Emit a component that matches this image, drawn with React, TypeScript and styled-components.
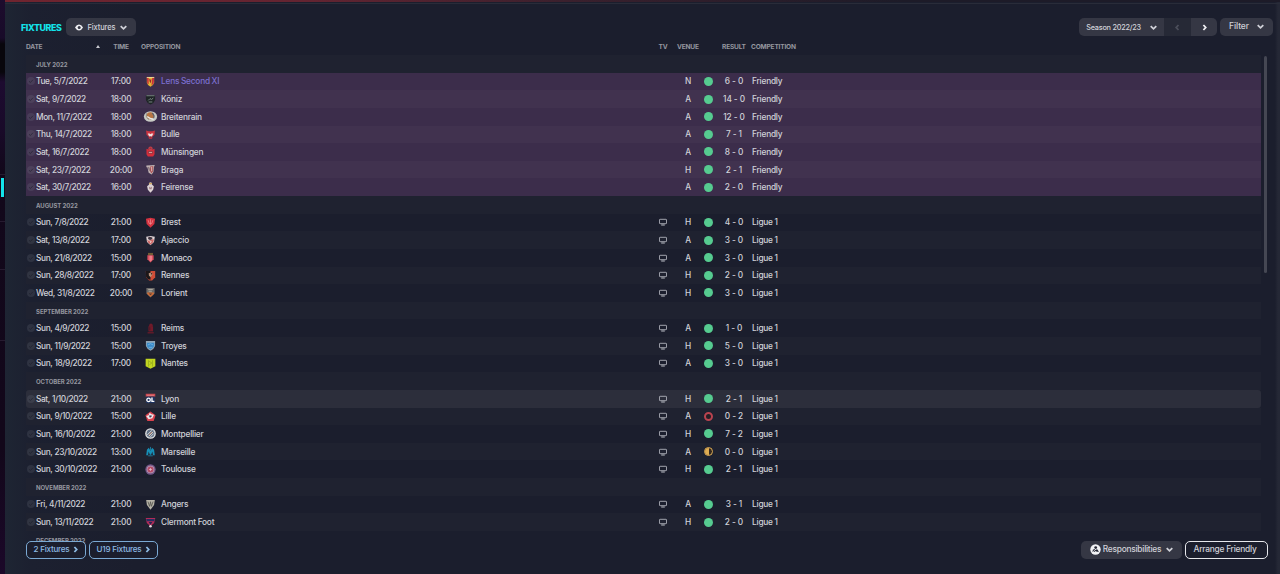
import * as React from "react"
import styled, { createGlobalStyle, css } from "styled-components"

const COLOR = {
  panel: "#1b1e2d",
  stripe: "#1f2230",
  friendly: "#3c2d4b",
  friendlyStripe: "#41324f",
  hover: "#2c2e3b",
  button: "#353744",
  text: "#d0d1d8",
  muted: "#94969f",
  cyan: "#13e3ea",
  blue: "#8dbbe4",
  blueLine: "#7ba9d3",
  link: "#7b6fd0",
  win: "#56cb90",
  loss: "#b9434f",
  draw: "#e0ad52",
}

const GlobalStyle = createGlobalStyle`
  body {
    margin: 0;
    background: ${COLOR.panel};
    overflow: hidden;
  }
  * {
    box-sizing: border-box;
  }
`

const Page = styled.div`
  display: flex;
  height: 100vh;
  font-family: Inter, "Liberation Sans", sans-serif;
  font-size: 8.3px;
  font-weight: 500;
  color: ${COLOR.text};
  white-space: nowrap;
`

const Rail = styled.div`
  display: flex;
  flex-direction: column;
  flex: none;
  width: 5px;
  background: linear-gradient(#1d0c2d 0, #180b29 38px, #08060c 44px, #08060c 72px, #1d0b30 82px, #190a29 130px, #12081b 170px, #12071a 450px, #1b0829 574px);
`

const RailItem = styled.div<{ $height: number; $active?: boolean }>`
  height: ${props => props.$height}px;
  border-bottom: 1px solid #261b30;
  ${props =>
    props.$active &&
    css`
      &::before {
        content: "";
        display: block;
        width: 3px;
        height: 19px;
        margin: 3px 0 0 1px;
        background: ${COLOR.cyan};
      }
    `}
`

const Panel = styled.main`
  display: flex;
  flex-direction: column;
  flex: 1;
  min-width: 0;
  background: linear-gradient(90deg, #20283400 1270px, #252836 1273px), linear-gradient(90deg, #1e2533 0, #1c2030 26px, ${COLOR.panel} 130px);
`

const TopEdge = styled.div`
  flex: none;
  height: 4px;
  border-bottom: 1px solid #292c39;
  background: linear-gradient(90deg, #70242f 0, #642431 300px, #3b202d 560px, #1d1b28 900px) top / 100% 2px no-repeat;
`

const Header = styled.header`
  display: flex;
  flex: none;
  height: 32px;
  padding: 14px 7px 0 16px;
`

const Title = styled.h1`
  width: 45px;
  margin: 0;
  font-size: 8.9px;
  font-weight: 800;
  line-height: 20px;
  letter-spacing: -0.4px;
  color: ${COLOR.cyan};
`

const Spacer = styled.div`
  flex: 1;
`

const Button = styled.button<{ $width: number; $size?: number }>`
  display: flex;
  align-items: center;
  justify-content: center;
  flex: none;
  gap: 5px;
  width: ${props => props.$width}px;
  height: 18px;
  padding: 0;
  border: 0;
  border-radius: 5px;
  background: ${COLOR.button};
  color: ${COLOR.text};
  font-family: inherit;
  font-weight: 500;
  font-size: ${props => props.$size || 7.5}px;
  letter-spacing: -0.12px;
`

const FilterButton = styled(Button)`
  gap: 8px;
  margin-left: 3px;
  padding-bottom: 2px;
`

const SeasonGroup = styled.div`
  display: flex;
  height: 18px;
  border-radius: 5px;
  overflow: hidden;
  ${Button} {
    border-radius: 0;
  }
`

const SeasonButton = styled(Button)`
  gap: 9px;
  letter-spacing: -0.24px;
`

const StepButton = styled(Button)<{ $dim?: boolean }>`
  background: ${props => (props.$dim ? "#262936" : COLOR.button)};
  color: ${props => (props.$dim ? "#4b4e5a" : "#f0f0f4")};
`

const Columns = styled.div`
  display: grid;
  grid-template-columns: 10px 66px 38px 21px 486px 32px 18px 22px 30px 3px 1fr;
  align-items: center;
`

const ColumnHeads = styled(Columns)`
  flex: none;
  height: 19px;
  margin: 0 0 0 21px;
  padding-top: 2px;
  font-size: 6.6px;
  font-weight: 700;
  letter-spacing: -0.2px;
  color: ${COLOR.muted};
`

const DateHead = styled.div`
  display: flex;
  align-items: center;
  justify-content: space-between;
  grid-column: 1 / 3;
  padding-right: 2px;
`

const Head = styled.div<{ $column: string; $shift?: number; $center?: boolean }>`
  grid-column: ${props => props.$column};
  margin-left: ${props => props.$shift || 0}px;
  text-align: ${props => (props.$center ? "center" : "left")};
`

const ListArea = styled.div`
  display: flex;
  flex: none;
  height: 494px;
  margin-bottom: -7px;
  padding-left: 21px;
`

const List = styled.div`
  width: 1235px;
`

const ScrollThumb = styled.div`
  width: 3px;
  height: 217px;
  margin: 1px 0 0 3px;
  border-radius: 2px;
  background: #454753;
`

const Month = styled.div<{ $striped: boolean }>`
  height: 17.635px;
  padding-left: 10px;
  line-height: 19px;
  font-size: 6px;
  font-weight: 700;
  letter-spacing: -0.05px;
  word-spacing: -0.1px;
  color: ${COLOR.muted};
  background: ${props => (props.$striped ? COLOR.stripe : "transparent")};
`

const rowColor = (kind: string | undefined, striped: boolean) => {
  if (kind === "hover") return COLOR.hover
  if (kind === "friendly") return striped ? COLOR.friendlyStripe : COLOR.friendly
  return striped ? COLOR.stripe : "transparent"
}

const Row = styled(Columns)<{ $kind?: string; $striped: boolean }>`
  height: 17.635px;
  border-radius: ${props => (props.$kind === "hover" ? 3 : 0)}px;
  background: ${props => rowColor(props.$kind, props.$striped)};
`

const Cell = styled.div<{ $center?: boolean; $color?: string }>`
  display: flex;
  align-items: center;
  justify-content: ${props => (props.$center ? "center" : "flex-start")};
  color: ${props => props.$color || "inherit"};
  letter-spacing: -0.2px;
  word-spacing: -0.3px;
`

const DateCell = styled(Cell)`
  letter-spacing: -0.36px;
  word-spacing: 0.2px;
`

const TimeCell = styled(Cell)`
  letter-spacing: -0.25px;
`

const Score = styled(Cell)`
  letter-spacing: -0.05px;
  word-spacing: -0.1px;
`

const Dot = styled.span<{ $result: string }>`
  width: 9px;
  height: 9px;
  border-radius: 50%;
  background: ${COLOR.win};
  ${props =>
    props.$result === "L" &&
    css`
      background: #251f25;
      border: 2px solid ${COLOR.loss};
    `}
  ${props =>
    props.$result === "D" &&
    css`
      border: 1.5px solid ${COLOR.draw};
      background: linear-gradient(90deg, ${COLOR.draw} 50%, #35291f 50%) padding-box;
    `}
`

const Footer = styled.footer`
  display: flex;
  flex: 1;
  align-items: flex-start;
  gap: 3px;
  margin-top: -1px;
  padding: 0 12px 0 21px;
`

const FooterButton = styled(Button)`
  gap: 3px;
  padding-bottom: 2px;
  letter-spacing: -0.25px;
`

const OutlineButton = styled(FooterButton)<{ $tone: string; $line: string }>`
  border: 1.5px solid ${props => props.$line};
  background: ${COLOR.panel};
  color: ${props => props.$tone};
  // sits over the last, partly scrolled month
  z-index: 1;
`

const SquadButton = styled(OutlineButton)`
  padding-left: 1px;
`

const ResponsibilitiesButton = styled(FooterButton)`
  gap: 2px;
  svg:last-child {
    margin-left: 3px;
  }
`

const ArrangeButton = styled(OutlineButton)`
  padding-right: 3px;
`

const chevronPaths = {
  down: "M.7 2.2 3.5 4.8 6.3 2.2",
  left: "M4.5 1 2.2 3.5 4.5 6",
  right: "M2.4 1 4.7 3.5 2.4 6",
}

const Chevron = ({ dir = "down" }: { dir?: keyof typeof chevronPaths }) => (
  <svg width="7" height="7" viewBox="0 0 7 7" fill="none" stroke="currentColor" strokeWidth="1.8">
    <path d={chevronPaths[dir]} />
  </svg>
)

const EyeIcon = () => (
  <svg width="8" height="7" viewBox="0 0 8 7">
    <path d="M0 3.5Q1.5 .6 4 .6T8 3.5Q6.5 6.4 4 6.4T0 3.5Z" fill="#eeeef2" />
    <circle cx="4.2" cy="3.4" r="1.5" fill="#353744" />
  </svg>
)

const StaffIcon = () => (
  <svg width="11" height="11" viewBox="0 0 11 11">
    <circle cx="5.5" cy="5.5" r="5.2" fill="#f2f2f5" />
    <circle cx="5.7" cy="3.6" r="1.4" fill="#252734" />
    <path d="M2 6.2 4.4 4.9 5.6 6.3 7 4.9 9 7.8H6.8L5.6 7 4.5 8H2.2L3.4 6.6Z" fill="#252734" />
    <path d="M3 8.1 5 6.2" stroke="#f2f2f5" strokeWidth=".8" />
  </svg>
)

const CheckIcon = () => (
  <svg width="10" height="10" viewBox="0 0 10 10">
    <circle cx="5" cy="5" r="4" fill="#8a8c98" fillOpacity=".17" />
    <path d="M3 5.2 4.4 6.5 7 3.7" fill="none" stroke="#191b28" strokeOpacity=".55" strokeWidth="1" />
  </svg>
)

const TvIcon = () => (
  <svg width="8" height="8" viewBox="0 0 8 8" fill="none" stroke="#b0b2bb">
    <rect x=".45" y="1.3" width="7.1" height="4.4" rx=".6" strokeWidth=".9" />
    <path d="M2.2 7H5.8" strokeWidth="1.1" />
  </svg>
)

const SHIELD = "M2 1H10V7Q9.5 9.8 6 11.6 2.5 9.8 2 7Z"

const crests: Record<string, React.ReactNode> = {
  "Lens Second XI": (
    <>
      <path d={SHIELD} fill="#e2b634" />
      <path d="M2 1H4V9L2.4 8ZM8 1H10L9.5 8 7 10.5Z" fill="#c9303b" />
      <path d="M4.5 3 6 4 7 3.2 6.4 8 5 6Z" fill="#9c2330" />
      <path d="M2 1.6H10" stroke="#f0dba0" strokeWidth="1" />
    </>
  ),
  Köniz: (
    <>
      <path d="M1 1H11V6.5Q10 9.8 6 11.5 2 9.8 1 6.5Z" fill="#1d2425" />
      <path d="M1.5 1.9H10.5M3.5 7 5.5 5 7 6 9 4.5M4 8.7H8" stroke="#8c9895" strokeWidth=".9" fill="none" />
    </>
  ),
  Breitenrain: (
    <>
      <ellipse cx="6" cy="6" rx="7.2" ry="5.7" fill="#c8cac4" />
      <ellipse cx="5.8" cy="5.3" rx="4.2" ry="3.9" fill="#b77543" />
      <path d="M1.6 2.5Q0 6 4 9.5" stroke="#8c8f88" strokeWidth="1" fill="none" />
      <path d="M2.5 6Q5 8.5 9.5 9" stroke="#e8eae6" strokeWidth="1.4" fill="none" />
      <path d="M7.8 2.2Q11 5 9.3 8" stroke="#5a5f69" strokeWidth="1.2" fill="none" />
    </>
  ),
  Bulle: (
    <>
      <path d="M1.2 1.6 4 2.4H8L10.8 1.6 10.3 6.5 8.3 7.8 7.7 10.5H4.3L3.7 7.8 1.7 6.5Z" fill="#cd3541" />
      <path d="M3 4.8H5L6 5.8 7 4.8H9L7.8 7.5 6 9.3 4.3 7.5Z" fill="#f0dfe0" />
      <path d="M5 8H7V9.6H5Z" fill="#862833" />
    </>
  ),
  Münsingen: (
    <>
      <circle cx="6" cy="3" r="2.4" fill="#c33f49" />
      <path d="M1.6 3 6 4.5 10.4 3V9L8.9 11.5H3.1L1.6 9Z" fill="#d52d3a" />
      <path d="M3.8 6H8.2V8H3.8ZM5 2.5H7" fill="#e8a9a8" stroke="#752732" strokeWidth=".7" />
    </>
  ),
  Braga: (
    <>
      <path d="M1.5 1.5 10.5 1V2.5H9.8L9.2 8.8 7.3 11.5 4 9.5 2.6 3.5H1.5Z" fill="#c0b2b2" />
      <path d="M6 2.5H9L8.6 8 7 10.3 5.2 7Z" fill="#a94d52" />
      <path d="M3.3 3 5 4V8L3.9 6Z" fill="#765f69" />
      <path d="M7.3 3V8" stroke="#e8d9d5" strokeWidth=".9" />
    </>
  ),
  Feirense: (
    <>
      <path d="M4.3 1 6 .4 7.7 1V3L9.7 4.5 8.9 8.5 6 11.7 3.1 8.5 2.3 4.5 4.3 3Z" fill="#ddd3d4" />
      <path d="M4.5 1H7.5V2.5H4.5Z" fill="#cda45d" />
      <path d="M4.3 5 6 6.2 7.7 5 7.2 8H4.8Z" fill="#a17e86" />
    </>
  ),
  Brest: (
    <>
      <path d="M1 2 6 .8 11 2 10.2 7.5 6 11.7 1.8 7.5Z" fill="#d33340" />
      <path d="M6 2.5V8.5M3.5 3.5 4.5 7H7.5L8.5 3.5" stroke="#ef8c92" strokeWidth=".8" fill="none" />
    </>
  ),
  Ajaccio: (
    <>
      <path d="M1.3 1.8 6 1 10.7 1.8 9.8 7.5 6 11.3 2.2 7.5Z" fill="#e0d6d8" />
      <path d="M3 3 5 2 8 2.6V4.6L5.5 5.4 3.7 4.6Z" fill="#423641" />
      <path d="M2.2 5.5 4.2 6.4 6 5.6 8.5 4.6 9.8 5 9 8 6 10.6 3.4 8.2Z" fill="#cd6865" />
      <path d="M5 6.8H7.5L6 9Z" fill="#ecd3d2" />
    </>
  ),
  Monaco: (
    <>
      <path d="M3.3 1H8.7V3.6H3.3Z" fill="#705b35" />
      <path d="M2.6 3.5H9.4V8L6 11.5 2.6 8Z" fill="#dc4f5d" />
      <path d="M4.8 4H7.6V9L6 10.3 4.8 9Z" fill="#ed7d87" />
    </>
  ),
  Rennes: (
    <>
      <path d="M.9 1H11.1V8L7.8 11.5H4.5L1.2 8Z" fill="#ce4d37" />
      <path d="M.9 1H6V10.5L3.5 10 1.2 8Z" fill="#1c1719" />
      <path d="M4 3.5 7.5 2.5 8.2 5 6 7.8 4.3 6Z" fill="#b59078" />
      <path d="M6.2 3 8 3.5 7.2 5.5Z" fill="#3c2324" />
    </>
  ),
  Lorient: (
    <>
      <path d="M1.5 1H10.5V7L6 11.5 1.5 7Z" fill="#6c6a68" />
      <path d="M2.3 6H9.7V7.5L6 11 2.5 7.5Z" fill="#d06c36" />
      <path d="M3.5 2.8H8.5M4 4.6H7.5" stroke="#b5b1a6" />
      <path d="M4 7H8L6 9Z" fill="#5b3e35" />
    </>
  ),
  Reims: (
    <>
      <circle cx="6.5" cy="2.5" r="1.9" fill="#6f1a29" />
      <path d="M3.8 3.5H8.8V9.2H3.8Z" fill="#711a29" />
      <path d="M2.8 10.7H9.5" stroke="#711a29" strokeWidth="1.3" />
      <path d="M5.2 4.5V8" stroke="#391825" strokeWidth=".8" />
    </>
  ),
  Troyes: (
    <>
      <path d="M1 1H11V6.5Q9.8 10 6 11.7 2.2 10 1 6.5Z" fill="#91a6b5" />
      <path d="M2 3H10V6.5Q8.5 9.5 6 10.4 3 9.5 2 6.5Z" fill="#3b8bc9" />
      <path d="M3 5.5 6 4 9 5.5M4 8H8" stroke="#7bbce6" strokeWidth=".8" fill="none" />
    </>
  ),
  Nantes: (
    <>
      <path d="M.7 .8H11.3V9L6 11.8.7 9Z" fill="#c1d621" />
      <path d="M3.8 2.5V9.3M8.2 2.5V9.3M4.5 3.5 7.5 5.5 4.8 7.3" stroke="#91a61d" strokeWidth=".8" fill="none" />
    </>
  ),
  Lyon: (
    <>
      <path d="M.8 .8H11.2V4H.8Z" fill="#cc4951" />
      <path d="M1.3 4H10.7V11H1.3Z" fill="#1e3360" />
      <circle cx="3.9" cy="7.5" r="1.9" fill="none" stroke="#fff" strokeWidth="1.4" />
      <path d="M7.6 5V9.1H10.2" fill="none" stroke="#fff" strokeWidth="1.5" />
      <path d="M2 2.5H10" stroke="#e59a99" strokeWidth=".7" />
    </>
  ),
  Lille: (
    <>
      <path d="M6 .6 11.5 4.5 9.5 10.8H2.5L.5 4.5Z" fill="#d9424e" />
      <path d="M5 2 7 3.5 9.8 4 8 8 4 9 1.3 5.5 4 4.5Z" fill="#f0e8eb" />
      <path d="M4.8 4.7 7.8 5.2 6.2 7.2 4.6 6.8Z" fill="#37435d" />
    </>
  ),
  Montpellier: (
    <>
      <circle cx="6" cy="6" r="5.8" fill="#dfe0e0" />
      <circle cx="6" cy="6" r="4.3" fill="#637288" />
      <path d="M2.5 7.5 7.5 2.5M4 9 9 4M5.8 9.7 9.5 6" stroke="#dfdfda" />
      <path d="M4.3 7.8 7.8 4.3" stroke="#ce845d" strokeWidth=".8" />
    </>
  ),
  Marseille: (
    <>
      <path d="M1.3 10 2.1 4 4.2 2 6 5.2 7.8 2 9.9 4 10.7 10H8.7L8 6 6.7 9.5H5.3L4 6 3.3 10Z" fill="#168fb7" />
      <path d="M6 1V5M3.5 10.7H8.5" stroke="#1c7d9f" />
    </>
  ),
  Toulouse: (
    <>
      <circle cx="6" cy="6" r="5.6" fill="#75578a" />
      <circle cx="6" cy="6" r="4.1" fill="#b59ab0" />
      <circle cx="6" cy="6" r="3.3" fill="#b34b69" />
      <path d="M4.5 6H7.5M6 4.5V7.5" stroke="#e4bec8" strokeWidth=".9" />
    </>
  ),
  Angers: (
    <>
      <path d="M1.3 1H10.7L9.9 6.5 6 11.7 2.1 6.5Z" fill="#b6b3a7" />
      <path d="M3.2 2.8 5 8 6 3 7 8 8.8 2.8" stroke="#55554f" strokeWidth=".9" fill="none" />
    </>
  ),
  "Clermont Foot": (
    <>
      <path d="M.8 1H11.2L10 6.5 6 10 2 6.5Z" fill="#b32b58" />
      <path d="M1.4 2.2H10.6L10 4.5H2Z" fill="#272d61" />
      <path d="M4 5.5H8L6 8.5Z" fill="#26264f" />
      <circle cx="6" cy="10" r="1.4" fill="#e8d9df" />
    </>
  ),
}

const Crest = ({ team }: { team: string }) => (
  <svg width="11" height="11" viewBox="0 0 12 12" overflow="visible">
    {crests[team]}
  </svg>
)

type Fixture = [date: string, time: string, team: string, venue: string, result: string, score: string]

const months: { name: string; friendly?: boolean; fixtures: Fixture[] }[] = [
  {
    name: "JULY 2022",
    friendly: true,
    fixtures: [
      ["Tue, 5/7/2022", "17:00", "Lens Second XI", "N", "W", "6 - 0"],
      ["Sat, 9/7/2022", "18:00", "Köniz", "A", "W", "14 - 0"],
      ["Mon, 11/7/2022", "18:00", "Breitenrain", "A", "W", "12 - 0"],
      ["Thu, 14/7/2022", "18:00", "Bulle", "A", "W", "7 - 1"],
      ["Sat, 16/7/2022", "18:00", "Münsingen", "A", "W", "8 - 0"],
      ["Sat, 23/7/2022", "20:00", "Braga", "H", "W", "2 - 1"],
      ["Sat, 30/7/2022", "16:00", "Feirense", "A", "W", "2 - 0"],
    ],
  },
  {
    name: "AUGUST 2022",
    fixtures: [
      ["Sun, 7/8/2022", "21:00", "Brest", "H", "W", "4 - 0"],
      ["Sat, 13/8/2022", "17:00", "Ajaccio", "A", "W", "3 - 0"],
      ["Sun, 21/8/2022", "15:00", "Monaco", "A", "W", "3 - 0"],
      ["Sun, 28/8/2022", "17:00", "Rennes", "H", "W", "2 - 0"],
      ["Wed, 31/8/2022", "20:00", "Lorient", "H", "W", "3 - 0"],
    ],
  },
  {
    name: "SEPTEMBER 2022",
    fixtures: [
      ["Sun, 4/9/2022", "15:00", "Reims", "A", "W", "1 - 0"],
      ["Sun, 11/9/2022", "15:00", "Troyes", "H", "W", "5 - 0"],
      ["Sun, 18/9/2022", "17:00", "Nantes", "A", "W", "3 - 0"],
    ],
  },
  {
    name: "OCTOBER 2022",
    fixtures: [
      ["Sat, 1/10/2022", "21:00", "Lyon", "H", "W", "2 - 1"],
      ["Sun, 9/10/2022", "15:00", "Lille", "A", "L", "0 - 2"],
      ["Sun, 16/10/2022", "21:00", "Montpellier", "H", "W", "7 - 2"],
      ["Sun, 23/10/2022", "13:00", "Marseille", "A", "D", "0 - 0"],
      ["Sun, 30/10/2022", "21:00", "Toulouse", "H", "W", "2 - 1"],
    ],
  },
  {
    name: "NOVEMBER 2022",
    fixtures: [
      ["Fri, 4/11/2022", "21:00", "Angers", "A", "W", "3 - 1"],
      ["Sun, 13/11/2022", "21:00", "Clermont Foot", "H", "W", "2 - 0"],
    ],
  },
  { name: "DECEMBER 2022", fixtures: [] },
]

const FixtureList = () => {
  let index = 0
  return (
    <List>
      {months.map(month => (
        <React.Fragment key={month.name}>
          <Month $striped={index++ % 2 === 0 && month.fixtures.length > 0}>{month.name}</Month>
          {month.fixtures.map(([date, time, team, venue, result, score]) => (
            <Row
              key={date}
              $striped={index++ % 2 === 0}
              $kind={month.friendly ? "friendly" : team === "Lyon" ? "hover" : undefined}
            >
              <Cell $center>
                <CheckIcon />
              </Cell>
              <DateCell>{date}</DateCell>
              <TimeCell $center>{time}</TimeCell>
              <Cell $center>
                <Crest team={team} />
              </Cell>
              <Cell $color={venue === "N" ? COLOR.link : undefined}>{team}</Cell>
              <Cell $center>{!month.friendly && <TvIcon />}</Cell>
              <Cell $center>{venue}</Cell>
              <Cell $center>
                <Dot $result={result} />
              </Cell>
              <Score $center>{score}</Score>
              <span />
              <Cell>{month.friendly ? "Friendly" : "Ligue 1"}</Cell>
            </Row>
          ))}
        </React.Fragment>
      ))}
    </List>
  )
}

export default function App() {
  return (
    <Page>
      <GlobalStyle />
      <Rail>
        <RailItem $height={175} />
        <RailItem $height={47} $active />
        <RailItem $height={48} />
        <RailItem $height={71} />
      </Rail>
      <Panel>
        <TopEdge />
        <Header>
          <Title>FIXTURES</Title>
          <Button $width={70}>
            <EyeIcon />
            Fixtures
            <Chevron />
          </Button>
          <Spacer />
          <SeasonGroup>
            <SeasonButton $width={85} $size={7.3}>
              Season 2022/23
              <Chevron />
            </SeasonButton>
            <StepButton $width={27} $dim>
              <Chevron dir="left" />
            </StepButton>
            <StepButton $width={26}>
              <Chevron dir="right" />
            </StepButton>
          </SeasonGroup>
          <FilterButton $width={53} $size={8.5}>
            Filter
            <Chevron />
          </FilterButton>
        </Header>
        <ColumnHeads>
          <DateHead>
            DATE
            <svg width="4" height="3" viewBox="0 0 4 3">
              <path d="M0 3 2 0 4 3Z" fill="#c9cad0" />
            </svg>
          </DateHead>
          <Head $column="3" $center>
            TIME
          </Head>
          <Head $column="4 / 6" $shift={1}>
            OPPOSITION
          </Head>
          <Head $column="6" $center>
            TV
          </Head>
          <Head $column="7 / 9" $shift={-2}>
            VENUE
          </Head>
          <Head $column="9" $shift={3}>
            RESULT
          </Head>
          <Head $column="11" $shift={-1}>
            COMPETITION
          </Head>
        </ColumnHeads>
        <ListArea>
          <FixtureList />
          <ScrollThumb />
        </ListArea>
        <Footer>
          <SquadButton $width={60} $size={8.1} $tone={COLOR.blue} $line={COLOR.blueLine}>
            2 Fixtures
            <Chevron dir="right" />
          </SquadButton>
          <SquadButton $width={69} $size={8.1} $tone={COLOR.blue} $line={COLOR.blueLine}>
            U19 Fixtures
            <Chevron dir="right" />
          </SquadButton>
          <Spacer />
          <ResponsibilitiesButton $width={101} $size={8.4}>
            <StaffIcon />
            Responsibilities
            <Chevron />
          </ResponsibilitiesButton>
          <ArrangeButton $width={83} $size={8.4} $tone={COLOR.text} $line="#e6e7ec">
            Arrange Friendly
          </ArrangeButton>
        </Footer>
      </Panel>
    </Page>
  )
}
